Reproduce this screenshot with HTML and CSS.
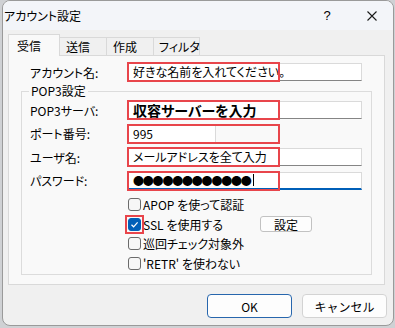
FILE: index.html
```html
<!DOCTYPE html>
<html lang="ja">
<head>
    <meta charset="UTF-8">
    <title>アカウント設定</title>
    <link rel="stylesheet" href="styles.css">
</head>
<body>
    <div class="dialog">
        <div class="titlebar">
            <span class="title">アカウント設定</span>
            <span class="help">?</span>
            <span class="close">
                <svg width="10" height="10" viewBox="0 0 10 10"><path d="M0.5 0.5L9.5 9.5M9.5 0.5L0.5 9.5" stroke="#1a1a1a" stroke-width="1.1" fill="none"/></svg>
            </span>
        </div>
        <div class="tabs">
            <div class="tab active">受信</div>
            <div class="tab">送信</div>
            <div class="tab">作成</div>
            <div class="tab tab-last">フィルタ</div>
        </div>
        <div class="panel">
            <div class="field">
                <label>アカウント名:</label>
                <div class="box">
                    <div class="input">好きな名前を入れてください。</div>
                    <span class="mark"></span>
                </div>
            </div>
            <fieldset class="group">
                <legend>POP3設定</legend>
                <div class="fields">
                    <div class="field">
                        <label>POP3サーバ:</label>
                        <div class="box">
                            <div class="input bold">収容サーバーを入力</div>
                            <span class="mark"></span>
                        </div>
                    </div>
                    <div class="field">
                        <label>ポート番号:</label>
                        <div class="box">
                            <div class="input short">995</div>
                            <span class="mark"></span>
                        </div>
                    </div>
                    <div class="field">
                        <label>ユーザ名:</label>
                        <div class="box">
                            <div class="input">メールアドレスを全て入力</div>
                            <span class="mark"></span>
                        </div>
                    </div>
                    <div class="field">
                        <label>パスワード:</label>
                        <div class="box">
                            <div class="input focused"><span class="dots">●●●●●●●●●●●●</span><span class="caret"></span></div>
                            <span class="mark"></span>
                        </div>
                    </div>
                </div>
                <div class="checks">
                    <div class="check-row">
                        <span class="check"></span>
                        <span>APOP を使って認証</span>
                    </div>
                    <div class="check-row">
                        <span class="check checked">
                            <svg width="11" height="11" viewBox="0 0 11 11"><path d="M2.5 5.8L4.6 7.8L8.6 3.4" stroke="#fff" stroke-width="1.2" fill="none"/></svg>
                            <span class="check-mark"></span>
                        </span>
                        <span class="ssl-label">SSL を使用する</span>
                        <button class="small-btn">設定</button>
                    </div>
                    <div class="check-row">
                        <span class="check"></span>
                        <span>巡回チェック対象外</span>
                    </div>
                    <div class="check-row">
                        <span class="check"></span>
                        <span>'RETR' を使わない</span>
                    </div>
                </div>
            </fieldset>
        </div>
        <div class="actions">
            <button class="btn default">OK</button>
            <button class="btn">キャンセル</button>
        </div>
    </div>
</body>
</html>
```

FILE: styles.css
```css
* {
    box-sizing: border-box;
}
body {
    margin: 0;
    background: #cfd1d4;
    font-family: "Noto Sans CJK JP", sans-serif;
    font-size: 12px;
    font-feature-settings: "palt";
    color: #000;
}
.dialog {
    width: 392px;
    height: 326px;
    margin-left: 2px;
    border: 1px solid #9a9a9a;
    border-radius: 8px;
    background: #f0f0f0;
    overflow: hidden;
}
.titlebar {
    height: 29px;
    display: flex;
    align-items: center;
    padding-left: 1px;
    background: #f3f5f9;
}
.title {
    flex: 1;
}
.help {
    width: 20px;
    text-align: center;
    font-family: "Liberation Sans", sans-serif;
    font-size: 13px;
}
.close {
    width: 42px;
    margin-left: 14px;
    display: flex;
    justify-content: center;
}
.tabs {
    height: 25px;
    display: flex;
    align-items: flex-end;
    padding-left: 5px;
    position: relative;
    z-index: 1;
}
.tab {
    width: 48px;
    height: 18px;
    margin-left: -1px;
    padding-left: 6px;
    border: 1px solid #d9d9d9;
    border-bottom: none;
    background: #f0f0f0;
    display: flex;
    align-items: center;
    white-space: nowrap;
}
.tab.active {
    width: 52px;
    height: 22px;
    margin-left: 0;
    margin-bottom: -1px;
    padding-left: 8px;
    padding-bottom: 1px;
    background: #f9f9f9;
}
.tab-last {
    width: 47px;
    padding-left: 5px;
}
.panel {
    width: 377px;
    height: 230px;
    margin-left: 5px;
    padding-top: 7px;
    border: 1px solid #d9d9d9;
    background: #f9f9f9;
}
.field {
    display: grid;
    grid-template-columns: 98px 234px;
    align-items: center;
    height: 18px;
}
.panel > .field {
    padding-left: 21px;
}
.box {
    position: relative;
    height: 18px;
}
.input {
    height: 18px;
    padding-left: 4px;
    border: 1px solid #dadada;
    border-bottom-color: #858585;
    background: #fff;
    line-height: 16px;
    white-space: nowrap;
}
.input.bold {
    font-size: 14px;
    font-weight: bold;
}
.input.short {
    width: 88px;
}
.input.focused {
    border-bottom: 2px solid #005fb8;
    display: flex;
    align-items: center;
}
.dots {
    letter-spacing: -1.2px;
    font-size: 11px;
}
.caret {
    width: 1px;
    height: 12px;
    margin-left: 2px;
    background: #000;
}
.mark {
    position: absolute;
    left: -1px;
    top: -1px;
    width: 153px;
    height: 20px;
    border: 2px solid #e8454b;
}
.group {
    height: 192px;
    margin: 2px 12px 0 12px;
    padding: 2px 8px 0 8px;
    border: 1px solid #dcdcdc;
    min-width: 0;
}
.group legend {
    padding: 0 2px;
    margin-left: -1px;
    line-height: 16px;
}
.fields {
    display: flex;
    flex-direction: column;
    gap: 5.5px;
}
.checks {
    margin-top: 5.5px;
    padding-left: 98px;
}
.check-row {
    height: 19.5px;
    display: flex;
    align-items: center;
}
.check {
    position: relative;
    width: 13px;
    height: 13px;
    margin-right: 2px;
    border: 1px solid #6b6b6b;
    border-radius: 3px;
    background: #f6f6f6;
}
.check.checked {
    border-color: #005fb8;
    background: #005fb8;
}
.check svg {
    display: block;
}
.check-mark {
    position: absolute;
    left: -4px;
    top: -4px;
    width: 19px;
    height: 19px;
    border: 2px solid #e8454b;
}
.ssl-label {
    width: 117px;
}
.small-btn {
    width: 52px;
    height: 16px;
    padding: 0;
    border: 1px solid #c2c2c2;
    border-radius: 3px;
    background: #fdfdfd;
    font-family: inherit;
    font-size: 12px;
    line-height: 13px;
}
.actions {
    display: flex;
    justify-content: flex-end;
    gap: 10px;
    margin-top: 9px;
    padding-right: 6px;
}
.btn {
    width: 85px;
    height: 24px;
    padding: 0;
    border: 1px solid #d3d3d3;
    border-radius: 4px;
    background: #fdfdfd;
    font-family: inherit;
    font-size: 12px;
    color: #000;
}
.btn.default {
    border-color: #2766ad;
}
```
